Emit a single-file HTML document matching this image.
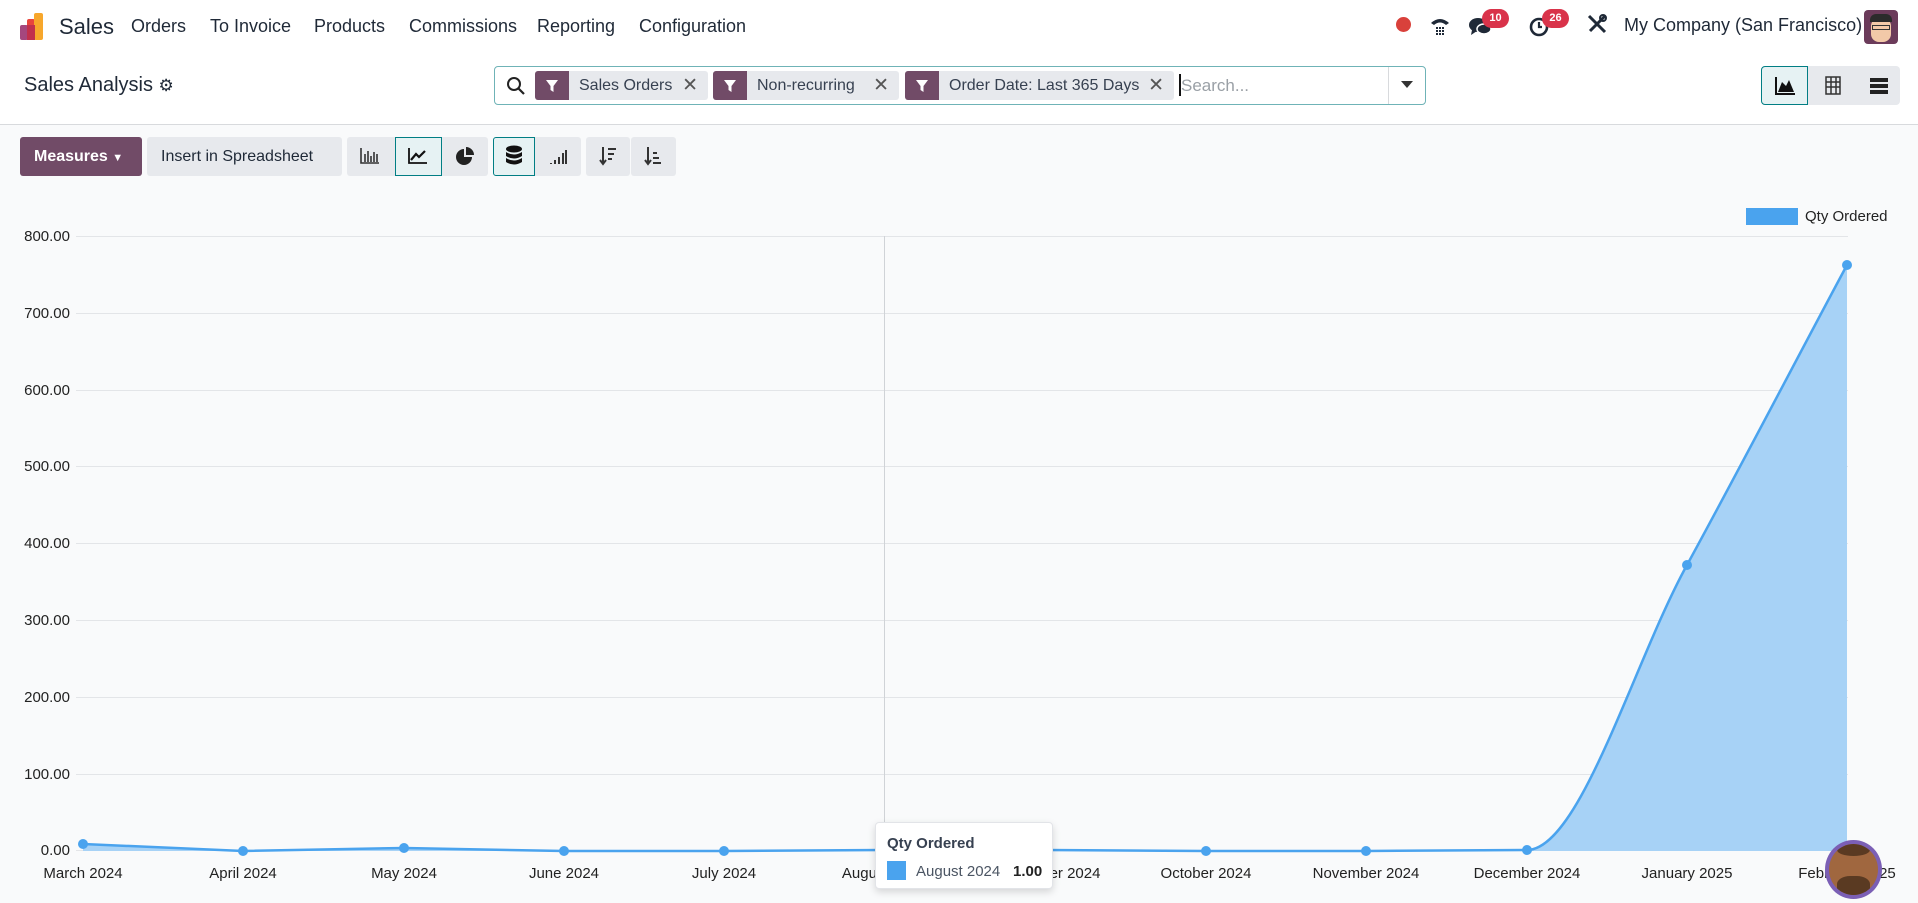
<!DOCTYPE html>
<html><head><meta charset="utf-8"><style>
*{box-sizing:border-box;margin:0;padding:0}
body{width:1918px;height:903px;overflow:hidden;background:#f9fafb;font-family:"Liberation Sans",sans-serif;color:#374151;position:relative}
.abs{position:absolute}
.nav{left:0;top:0;width:1918px;height:57px;background:#fff}
.nav span{position:absolute;top:16px;font-size:18px;color:#1f2937}
.cp{left:0;top:57px;width:1918px;height:68px;background:#fff;border-bottom:1px solid #d8dadd}
.chip{position:absolute;top:71px;height:29px;background:#e7e9ed;border-radius:3px;font-size:16px;color:#374151}
.chip .f{position:absolute;left:0;top:0;width:34px;height:29px;background:#714b67;border-radius:3px 0 0 3px}
.chip .t{position:absolute;left:44px;top:6px;white-space:nowrap}
.chip .x{position:absolute;right:10px;top:3px;font-size:19px;color:#555}
.btn{position:absolute;top:137px;height:39px;background:#e7e9ed;border-radius:3px}
.sel{background:#e6f2f3;border:1px solid #017e84}
.yl{position:absolute;left:0;width:70px;text-align:right;font-size:15px;color:#222}
.xl{position:absolute;top:865px;font-size:15px;color:#222;transform:translateX(-50%);white-space:nowrap}
</style></head><body>
<div class="abs nav">
<svg class="abs" style="left:18px;top:12px" width="30" height="30" viewBox="0 0 30 30"><rect x="2" y="13" width="8" height="15" rx="2" fill="#a5477e"/><rect x="9" y="7" width="8" height="21" rx="2" fill="#e8453c"/><rect x="16" y="1" width="9" height="27" rx="2" fill="#f7a72c"/><rect x="9" y="13" width="8" height="15" fill="#c2304c"/></svg>
<span style="left:59px;top:14px;font-size:22px">Sales</span>
<span style="left:131px">Orders</span><span style="left:210px">To Invoice</span><span style="left:314px">Products</span><span style="left:409px">Commissions</span><span style="left:537px">Reporting</span><span style="left:639px">Configuration</span>
<div class="abs" style="left:1396px;top:17px;width:15px;height:15px;border-radius:50%;background:#d9413b"></div>
<svg class="abs" style="left:1428px;top:14px" width="24" height="24" viewBox="0 0 24 24"><path d="M3 9 Q12 1 21 9 L18 11 Q12 6 6 11Z" fill="#1f2937"/><g fill="#1f2937"><rect x="8" y="13" width="2" height="2"/><rect x="11" y="13" width="2" height="2"/><rect x="14" y="13" width="2" height="2"/><rect x="8" y="16" width="2" height="2"/><rect x="11" y="16" width="2" height="2"/><rect x="14" y="16" width="2" height="2"/><rect x="8" y="19" width="2" height="2"/><rect x="11" y="19" width="2" height="2"/><rect x="14" y="19" width="2" height="2"/></g></svg>
<svg class="abs" style="left:1468px;top:15px" width="26" height="24" viewBox="0 0 26 24"><ellipse cx="10" cy="10" rx="9" ry="7" fill="#1f2937"/><path d="M4 15 L3 20 L9 16Z" fill="#1f2937"/><ellipse cx="16" cy="14" rx="7" ry="5" fill="#1f2937" stroke="#fff" stroke-width="1.5"/></svg>
<div class="abs" style="left:1482px;top:9px;width:27px;height:19px;border-radius:10px;background:#d9334a;color:#fff;font-size:11px;font-weight:bold;text-align:center;line-height:19px">10</div>
<svg class="abs" style="left:1528px;top:14px" width="24" height="24" viewBox="0 0 24 24"><circle cx="11" cy="13" r="8" fill="none" stroke="#1f2937" stroke-width="2.6"/><path d="M11 8v5h3" stroke="#1f2937" stroke-width="2.2" fill="none"/></svg>
<div class="abs" style="left:1542px;top:9px;width:27px;height:19px;border-radius:10px;background:#d9334a;color:#fff;font-size:11px;font-weight:bold;text-align:center;line-height:19px">26</div>
<svg class="abs" style="left:1586px;top:13px" width="22" height="22" viewBox="0 0 22 22"><path d="M3 3 L19 19 M19 3 L4 18" stroke="#1f2937" stroke-width="3"/><circle cx="17" cy="5" r="3" fill="none" stroke="#1f2937" stroke-width="2"/></svg>
<span style="left:1624px;top:15px">My Company (San Francisco)</span>
<div class="abs" style="left:1864px;top:10px;width:34px;height:34px;border-radius:4px;background:#6b3b5a;overflow:hidden"><div class="abs" style="left:7px;top:8px;width:20px;height:24px;border-radius:8px;background:#f2c9a8"></div><div class="abs" style="left:6px;top:4px;width:22px;height:8px;border-radius:6px 6px 0 0;background:#2b2b2b"></div><div class="abs" style="left:8px;top:15px;width:18px;height:5px;border:1.5px solid #333"></div></div>
</div>
<div class="abs cp"></div>
<div class="abs" style="left:24px;top:74px;font-size:20px;color:#1f2937">Sales Analysis <span style="font-size:17px">⚙</span></div>
<div class="abs" style="left:494px;top:66px;width:932px;height:39px;border:1px solid #6fb3b7;border-radius:4px;background:#fff"></div>
<svg class="abs" style="left:506px;top:76px" width="20" height="20" viewBox="0 0 20 20"><circle cx="8" cy="8" r="6" fill="none" stroke="#222" stroke-width="2"/><path d="M12.5 12.5 L18 18" stroke="#222" stroke-width="2.2"/></svg>
<div class="chip" style="left:535px;width:173px"><div class="f"></div><span class="t">Sales Orders</span><span class="x">✕</span></div>
<div class="chip" style="left:713px;width:186px"><div class="f"></div><span class="t">Non-recurring</span><span class="x">✕</span></div>
<div class="chip" style="left:905px;width:269px"><div class="f"></div><span class="t">Order Date: Last 365 Days</span><span class="x">✕</span></div>
<svg class="abs" style="left:544px;top:78px" width="16" height="16"><path d="M2 2h12l-4.5 6v6l-3-2V8Z" fill="#fff"/></svg>
<svg class="abs" style="left:722px;top:78px" width="16" height="16"><path d="M2 2h12l-4.5 6v6l-3-2V8Z" fill="#fff"/></svg>
<svg class="abs" style="left:914px;top:78px" width="16" height="16"><path d="M2 2h12l-4.5 6v6l-3-2V8Z" fill="#fff"/></svg>
<div class="abs" style="left:1179px;top:74px;width:2px;height:22px;background:#111"></div>
<div class="abs" style="left:1181px;top:76px;font-size:17px;color:#9aa0a6">Search...</div>
<div class="abs" style="left:1388px;top:67px;width:1px;height:37px;background:#d8dadd"></div>
<div class="abs" style="left:1401px;top:81px;border:6px solid transparent;border-top:7px solid #333"></div>
<div class="abs" style="left:1761px;top:66px;width:139px;height:39px;background:#e7e9ed;border-radius:4px"></div>
<div class="abs sel" style="left:1761px;top:66px;width:47px;height:39px;border-radius:4px 0 0 4px"></div>
<svg class="abs" style="left:1774px;top:76px" width="22" height="20"><path d="M2 1v17h19" stroke="#111" stroke-width="2" fill="none"/><path d="M4 16 L8 6 L12 10 L15 4 L20 16Z" fill="#111"/></svg>
<svg class="abs" style="left:1822px;top:74px" width="22" height="22"><path d="M4 3h14v17H4Z M4 8h14 M4 13h14 M9 3v17 M14 3v17" stroke="#333" stroke-width="1.5" fill="none"/></svg>
<svg class="abs" style="left:1869px;top:76px" width="20" height="20"><rect x="1" y="2" width="18" height="4" fill="#222"/><rect x="1" y="8" width="18" height="4" fill="#222"/><rect x="1" y="14" width="18" height="4" fill="#222"/></svg>
<div class="btn" style="left:20px;width:122px;background:#714b67;color:#fff;font-weight:bold;font-size:16px;padding:11px 0 0 14px">Measures <span style="font-size:11px">▼</span></div>
<div class="btn" style="left:147px;width:195px;font-size:16px;color:#1f2937;padding:11px 0 0 14px">Insert in Spreadsheet</div>
<div class="btn" style="left:347px;width:141px"></div>
<div class="btn sel" style="left:395px;width:47px;border-radius:0"></div>
<div class="btn" style="left:493px;width:88px"></div>
<div class="btn sel" style="left:493px;width:42px;border-radius:3px 0 0 3px"></div>
<div class="btn" style="left:586px;width:44px"></div><div class="btn" style="left:631px;width:45px"></div>
<svg class="abs" style="left:359px;top:146px" width="22" height="20"><path d="M2 2v15h18" stroke="#333" stroke-width="1.6" fill="none"/><path d="M6 8v8 M9 5v11 M12 10v6 M15 6v10 M18 8v8" stroke="#333" stroke-width="1.6"/></svg>
<svg class="abs" style="left:407px;top:146px" width="22" height="20"><path d="M2 2v15h18" stroke="#111" stroke-width="1.8" fill="none"/><path d="M4 14 L9 8 L12 11 L18 5" stroke="#111" stroke-width="2.2" fill="none"/></svg>
<svg class="abs" style="left:455px;top:146px" width="20" height="20"><path d="M9 3 A8 8 0 1 0 17 11 L9 11Z" fill="#222"/><path d="M11 1 A8 8 0 0 1 19 9 L11 9Z" fill="#222"/></svg>
<svg class="abs" style="left:504px;top:144px" width="20" height="24"><ellipse cx="10" cy="5" rx="8" ry="3.5" fill="#111"/><path d="M2 8 Q10 13 18 8 V12 Q10 17 2 12Z M2 14 Q10 19 18 14 V18 Q10 23 2 18Z" fill="#111"/></svg>
<svg class="abs" style="left:548px;top:148px" width="20" height="18"><path d="M3 15v1 M7 12v4 M11 9v7 M15 5v11 M18 2v14" stroke="#333" stroke-width="2"/></svg>
<svg class="abs" style="left:598px;top:145px" width="20" height="22"><path d="M5 2v17 M2 15l3 4 3-4" stroke="#333" stroke-width="2" fill="none"/><path d="M10 4h8 M10 9h6 M10 14h4" stroke="#333" stroke-width="2"/></svg>
<svg class="abs" style="left:643px;top:145px" width="20" height="22"><path d="M5 2v17 M2 15l3 4 3-4" stroke="#333" stroke-width="2" fill="none"/><path d="M10 8h4 M10 13h6 M10 18h8" stroke="#333" stroke-width="2"/></svg>

<svg class="abs" style="left:0;top:0" width="1918" height="903">
<g stroke="#e3e5e8" stroke-width="1">
<path d="M76 236.5H1848 M76 313.5H1848 M76 390.5H1848 M76 466.5H1848 M76 543.5H1848 M76 620.5H1848 M76 697.5H1848 M76 774.5H1848 M76 850.5H1848"/>
</g>
<path d="M884.5 236V850" stroke="#d0d3d7"/>
<path d="M83 844 L243 851 L404 848 L564 851 L724 851 L884 850 L1045 850 L1206 851 L1366 851 L1527 850 C1580 850 1634 661 1687 565 C1740 468 1794 364 1847 265 L1847 851 L83 851Z" fill="#a7d2f6"/>
<path d="M83 844 L243 851 L404 848 L564 851 L724 851 L884 850 L1045 850 L1206 851 L1366 851 L1527 850 C1580 850 1634 661 1687 565 C1740 468 1794 364 1847 265" stroke="#4aa3ee" stroke-width="2.5" fill="none"/>
<g fill="#4aa3ee"><circle cx="83" cy="844" r="5"/><circle cx="243" cy="851" r="5"/><circle cx="404" cy="848" r="5"/><circle cx="564" cy="851" r="5"/><circle cx="724" cy="851" r="5"/><circle cx="1045" cy="850" r="5"/><circle cx="1206" cy="851" r="5"/><circle cx="1366" cy="851" r="5"/><circle cx="1527" cy="850" r="5"/><circle cx="1687" cy="565" r="5"/><circle cx="1847" cy="265" r="5"/></g>
<rect x="1746" y="208" width="52" height="17" fill="#4aa3ee"/>
<text x="1805" y="221" font-family="Liberation Sans" font-size="15" fill="#222">Qty Ordered</text>
</svg>
<div class="yl" style="top:228px">800.00</div><div class="yl" style="top:305px">700.00</div><div class="yl" style="top:382px">600.00</div><div class="yl" style="top:458px">500.00</div><div class="yl" style="top:535px">400.00</div><div class="yl" style="top:612px">300.00</div><div class="yl" style="top:689px">200.00</div><div class="yl" style="top:766px">100.00</div><div class="yl" style="top:842px">0.00</div>
<div class="xl" style="left:83px">March 2024</div><div class="xl" style="left:243px">April 2024</div><div class="xl" style="left:404px">May 2024</div><div class="xl" style="left:564px">June 2024</div><div class="xl" style="left:724px">July 2024</div><div class="xl" style="left:884px">August 2024</div><div class="xl" style="left:1045px">September 2024</div><div class="xl" style="left:1206px">October 2024</div><div class="xl" style="left:1366px">November 2024</div><div class="xl" style="left:1527px">December 2024</div><div class="xl" style="left:1687px">January 2025</div><div class="xl" style="left:1847px">February 2025</div>
<div class="abs" style="left:875px;top:822px;width:178px;height:67px;background:#fff;border:1px solid #e2e4e8;border-radius:4px;box-shadow:0 3px 8px rgba(0,0,0,.15)">
<div class="abs" style="left:11px;top:12px;font-size:15px;font-weight:bold;color:#374151">Qty Ordered</div>
<div class="abs" style="left:11px;top:38px;width:19px;height:19px;background:#4aa3ee"></div>
<div class="abs" style="left:40px;top:40px;font-size:15px;color:#4b5563">August 2024</div>
<div class="abs" style="left:137px;top:40px;font-size:15px;font-weight:bold;color:#222">1.00</div>
</div>
<div class="abs" style="left:1825px;top:840px;width:57px;height:59px;border-radius:50%;background:#7b5fb5;padding:4px"><div style="width:49px;height:51px;border-radius:50%;background:#a0673f;position:relative;overflow:hidden"><div class="abs" style="left:8px;top:0;width:33px;height:12px;background:#5a3a22;border-radius:50%"></div><div class="abs" style="left:8px;top:32px;width:33px;height:20px;background:#5a3a22;border-radius:40%"></div></div></div>
</body></html>
